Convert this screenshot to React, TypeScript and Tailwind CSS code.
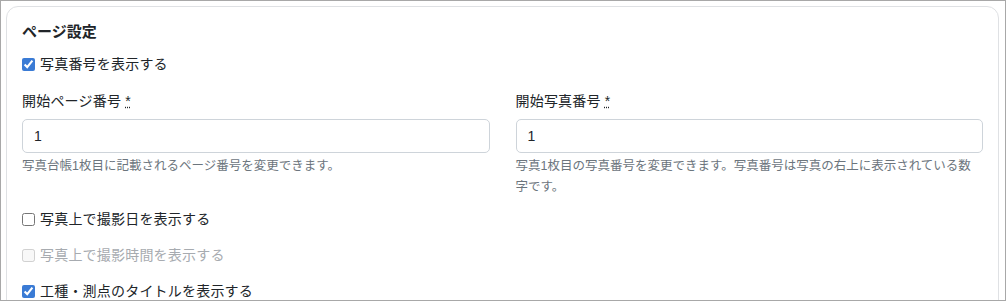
import { type ReactNode } from "react";

const font = "font-['Liberation_Sans','Noto_Sans_CJK_JP',sans-serif]";

const CheckRow = ({
  label,
  checked = false,
  disabled = false,
  className = "",
}: {
  label: string;
  checked?: boolean;
  disabled?: boolean;
  className?: string;
}) => (
  <label className={`flex items-center gap-[5px] h-[21px] ${className}`}>
    <input
      type="checkbox"
      defaultChecked={checked}
      disabled={disabled}
      className="w-[13px] h-[13px] accent-[#3a7bd5]"
    />
    <span
      className={`text-[14px] leading-[21px] tracking-[0.2px] ${
        disabled ? "text-[#a7abb0]" : "text-[#212529]"
      }`}
    >
      {label}
    </span>
  </label>
);

const Field = ({ label, help }: { label: string; help: ReactNode }) => (
  <div className="flex flex-col">
    <div className="text-[14px] leading-[21px] tracking-[0.2px] text-[#212529] mb-[7px]">
      {label} <abbr title="必須">*</abbr>
    </div>
    <input
      type="text"
      defaultValue="1"
      className="h-[34px] w-full border border-[#ced4da] rounded-[5px] px-[11px] text-[14px] text-[#212529] outline-none"
    />
    <p className="mt-[3px] text-[12.5px] leading-[21px] text-[#6c757d]">{help}</p>
  </div>
);

export default function App() {
  return (
    <div
      className={`${font} w-[1006px] h-[301px] overflow-hidden border border-[#a8a8a8] bg-white pl-[5px] pr-[6px] pt-[5px]`}
    >
      <div className="border border-[#dfe1e4] rounded-[12px] px-[15px] pt-[14px] pb-6 h-[320px]">
        <h2 className="text-[15px] leading-[21px] font-bold text-[#212529]">ページ設定</h2>

        <CheckRow label="写真番号を表示する" checked className="mt-[12px]" />

        <div className="grid grid-cols-2 gap-x-[26px] mt-[16px]">
          <Field
            label="開始ページ番号"
            help="写真台帳1枚目に記載されるページ番号を変更できます。"
          />
          <Field
            label="開始写真番号"
            help="写真1枚目の写真番号を変更できます。写真番号は写真の右上に表示されている数字です。"
          />
        </div>

        <div className="flex flex-col gap-[15px] mt-[11px]">
          <CheckRow label="写真上で撮影日を表示する" />
          <CheckRow label="写真上で撮影時間を表示する" disabled />
          <CheckRow label="工種・測点のタイトルを表示する" checked />
        </div>
      </div>
    </div>
  );
}
